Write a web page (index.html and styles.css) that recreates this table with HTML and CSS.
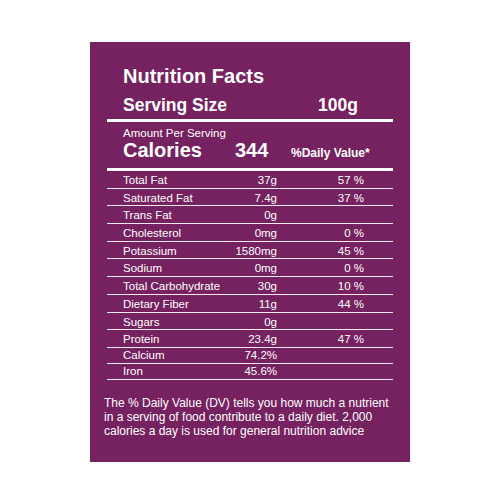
FILE: index.html
```html
<!DOCTYPE html>
<html lang="en">
<head>
    <meta charset="UTF-8">
    <meta name="viewport" content="width=device-width, initial-scale=1.0">
    <title>Nutrition Facts</title>
    <link rel="stylesheet" href="styles.css">
</head>
<body>
    <div class="label">
        <h1 class="title">Nutrition Facts</h1>
        <div class="serving">
            <span class="serving-name">Serving Size</span>
            <span>100g</span>
        </div>

        <div class="calories-block">
            <div class="amount">Amount Per Serving</div>
            <div class="calories">
                <span class="calories-name">Calories</span>
                <span class="calories-value">344</span>
                <span class="daily-head">%Daily Value*</span>
            </div>
        </div>

        <div class="facts">
            <div class="row"><span>Total Fat</span><span class="num">37g</span><span class="num">57 %</span></div>
            <div class="row"><span>Saturated Fat</span><span class="num">7.4g</span><span class="num">37 %</span></div>
            <div class="row"><span>Trans Fat</span><span class="num">0g</span><span class="num"></span></div>
            <div class="row"><span>Cholesterol</span><span class="num">0mg</span><span class="num">0 %</span></div>
            <div class="row"><span>Potassium</span><span class="num">1580mg</span><span class="num">45 %</span></div>
            <div class="row"><span>Sodium</span><span class="num">0mg</span><span class="num">0 %</span></div>
            <div class="row"><span>Total Carbohydrate</span><span class="num">30g</span><span class="num">10 %</span></div>
            <div class="row"><span>Dietary Fiber</span><span class="num">11g</span><span class="num">44 %</span></div>
            <div class="row"><span>Sugars</span><span class="num">0g</span><span class="num"></span></div>
            <div class="row"><span>Protein</span><span class="num">23.4g</span><span class="num">47 %</span></div>
            <div class="row mineral"><span>Calcium</span><span class="num">74.2%</span><span class="num"></span></div>
            <div class="row mineral"><span>Iron</span><span class="num">45.6%</span><span class="num"></span></div>
        </div>

        <p class="note">The % Daily Value (DV) tells you how much a nutrient in a serving of food contribute to a daily diet. 2,000 calories a day is used for general nutrition advice</p>
    </div>
</body>
</html>
```

FILE: styles.css
```css
body {
    font-family: 'Liberation Sans', Arial, sans-serif;
    background: #ffffff;
    margin: 0;
    padding: 0;
    color: #ffffff;
}
.label {
    width: 286px;
    margin: 42px auto 0;
    padding: 22px 17px 24px;
    background: #762160;
}
.title {
    font-size: 20px;
    line-height: 24px;
    font-weight: bold;
    margin: 0 0 7px;
    padding-left: 16px;
}
.serving {
    display: flex;
    font-size: 17.5px;
    line-height: 20px;
    font-weight: bold;
    padding-left: 16px;
    padding-bottom: 4px;
    border-bottom: 3px solid #ffffff;
}
.serving-name {
    width: 195px;
}
.calories-block {
    padding: 5px 0 4px 16px;
    border-bottom: 3px solid #ffffff;
}
.amount {
    font-size: 11.5px;
    line-height: 13px;
}
.calories {
    display: flex;
    align-items: baseline;
    font-weight: bold;
    font-size: 20px;
    line-height: 21px;
}
.calories-name {
    width: 112px;
}
.calories-value {
    width: 56px;
}
.daily-head {
    font-size: 12px;
}
.facts {
    font-size: 11.5px;
}
.row {
    display: grid;
    grid-template-columns: 1fr 50px 87px;
    height: 14.7px;
    padding: 2px 29px 0 16px;
    line-height: 14.7px;
    white-space: nowrap;
    border-bottom: 1px solid rgba(255, 255, 255, 0.9);
}
.row .num {
    text-align: right;
}
.row.mineral {
    height: 15px;
    padding-top: 0;
    line-height: 15px;
}
.note {
    font-size: 12px;
    line-height: 14px;
    margin: 16.5px -1px 0 -3px;
}
```
